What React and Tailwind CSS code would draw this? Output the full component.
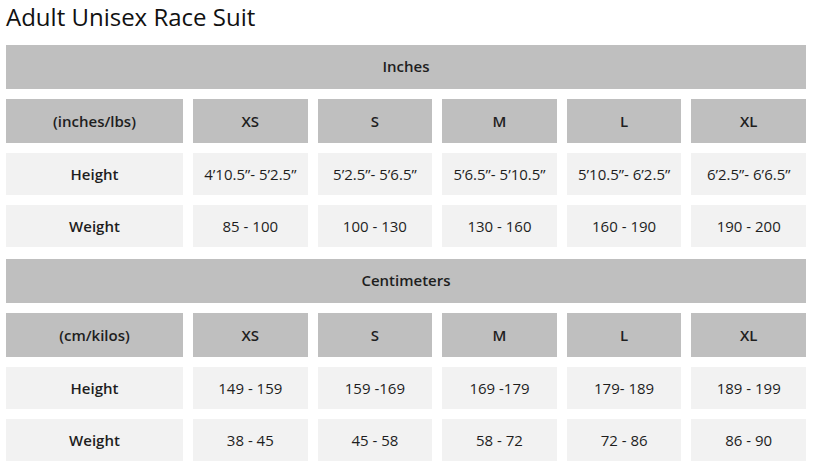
import React from "react";

const sections = [
  {
    title: "Inches",
    unit: "(inches/lbs)",
    height: ["4\u201910.5\u201d- 5\u20192.5\u201d", "5\u20192.5\u201d- 5\u20196.5\u201d", "5\u20196.5\u201d- 5\u201910.5\u201d", "5\u201910.5\u201d- 6\u20192.5\u201d", "6\u20192.5\u201d- 6\u20196.5\u201d"],
    weight: ["85 - 100", "100 - 130", "130 - 160", "160 - 190", "190 - 200"],
  },
  {
    title: "Centimeters",
    unit: "(cm/kilos)",
    height: ["149 - 159", "159 -169", "169 -179", "179- 189", "189 - 199"],
    weight: ["38 - 45", "45 - 58", "58 - 72", "72 - 86", "86 - 90"],
  },
];

const sizes = ["XS", "S", "M", "L", "XL"];

function Section({ s }) {
  return (
    <div className="flex flex-col gap-[10px]">
      <div className="h-[44px] bg-[#bfbfbf] flex items-center justify-center font-semibold text-[15px] pb-[2px]">
        {s.title}
      </div>
      <div className="grid grid-cols-[177px_repeat(5,1fr)] gap-x-[10px] h-[44px]">
        <div className="bg-[#bfbfbf] flex items-center justify-center font-semibold">{s.unit}</div>
        {sizes.map((z) => (
          <div key={z} className="bg-[#bfbfbf] flex items-center justify-center font-semibold">{z}</div>
        ))}
      </div>
      <div className="grid grid-cols-[177px_repeat(5,1fr)] gap-x-[10px] h-[42px]">
        <div className="bg-[#f2f2f2] flex items-center justify-center font-semibold">Height</div>
        {s.height.map((v, i) => (
          <div key={i} className="bg-[#f2f2f2] flex items-center justify-center">{v}</div>
        ))}
      </div>
      <div className="grid grid-cols-[177px_repeat(5,1fr)] gap-x-[10px] h-[42px]">
        <div className="bg-[#f2f2f2] flex items-center justify-center font-semibold">Weight</div>
        {s.weight.map((v, i) => (
          <div key={i} className="bg-[#f2f2f2] flex items-center justify-center">{v}</div>
        ))}
      </div>
    </div>
  );
}

export default function App() {
  return (
    <div className="w-[814px] h-[470px] bg-white text-[#1e1e1e] font-['Open_Sans',sans-serif] text-[15px] overflow-hidden">
      <div className="pl-[6px] pt-[1px] h-[45px] text-[24px] leading-[31px] text-[#111]">Adult Unisex Race Suit</div>
      <div className="w-[800px] ml-[6px] flex flex-col gap-[12px]">
        {sections.map((s) => (
          <Section key={s.title} s={s} />
        ))}
      </div>
    </div>
  );
}
